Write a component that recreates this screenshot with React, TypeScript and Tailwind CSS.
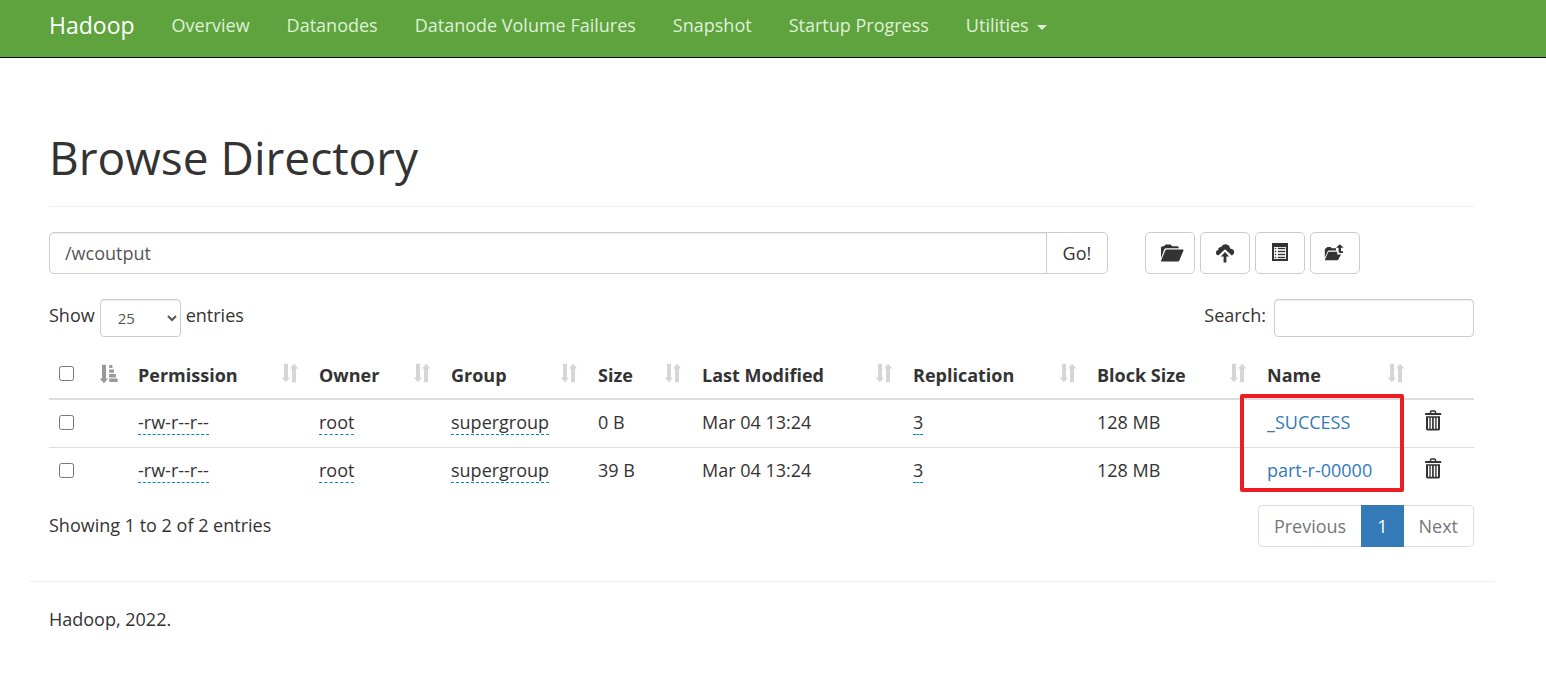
import React from "react";

type IconProps = { className?: string };

const FolderOpen = () => (
  <svg width="28" height="18" viewBox="-4 0 28 18" fill="currentColor" aria-hidden="true">
    <path d="M1 14.2V3.2L2.6 2.2H4L5.6 0.4H10.6L12.2 2.2H17.2Q18.9 2.2 18.9 3.9V4.2H6.2Q4.8 4.2 4.3 5.3Z" />
    <path d="M6.4 5.6H23Q23.8 5.6 23.5 6.4L19.3 16.6Q19 17.4 18.2 17.4H1.6Q0.8 17.4 1.1 16.6L5.3 6.4Q5.6 5.6 6.4 5.6Z" />
  </svg>
);

const CloudUpload = () => (
  <svg width="20" height="20" viewBox="0 0 20 20" fill="currentColor" aria-hidden="true">
    <path d="M2.8 12.2Q0.9 11.8 0.9 9.7Q0.9 7.4 3.2 7Q2.8 4.8 4.7 4.2Q5.6 4 6.1 4.2Q7.4 1.2 10.6 1.2Q14.6 1.6 15.1 5.4Q19.2 5.8 19.2 9.2Q19.2 11.8 16.8 12.4L10 6.2L3.6 12.3Z" />
    <path d="M10 9L14.2 13.6H11.4V19.4H8.6V13.6H5.8Z" />
  </svg>
);

const ListAlt = () => (
  <svg width="18" height="20" viewBox="0 0 18 20" fill="currentColor" aria-hidden="true">
    <path fillRule="evenodd" d="M1 0H17V18H1ZM3 4V16H15V4Z" />
    <path d="M4 5H5V6H4ZM7 5H14V6H7ZM4 8H5V9H4ZM7 8H14V9H7ZM4 11H5V12H4ZM7 11H14V12H7ZM4 14H5V15H4ZM7 14H14V15H7Z" stroke="currentColor" strokeWidth="0.4" />
  </svg>
);

const FolderUp = () => (
  <svg width="22" height="18" viewBox="0 0 22 18" fill="currentColor" aria-hidden="true">
    <path d="M0.8 13.6V5L2 4.2L3.4 3H6.6L7.8 4.2H12V6.6H5Q4 6.6 3.6 7.6Z" />
    <path d="M5 7.8H13.2V10.6H17L14.4 15.6Q14 16.3 13.2 16.3H1.4Q0.7 16.3 1 15.6L4 8.6Q4.3 7.8 5 7.8Z" />
    <path d="M15.8 0.3L19.6 3.8H17V7.2H19V9H15.8Q14.6 9 14.6 7.6V3.8H12Z" />
  </svg>
);

const Trash = () => (
  <svg width="18" height="21" viewBox="1 0 18 21" aria-hidden="true">
    <path d="M6.5 3V2Q6.5 1 7.5 1H10.5Q11.5 1 11.5 2V3" fill="none" stroke="currentColor" strokeWidth="1.5" />
    <path fill="currentColor" d="M2 3H16Q17.3 3.2 17.3 4V5H0.7V4Q0.7 3.2 2 3Z" />
    <path fill="currentColor" fillRule="evenodd" d="M2 6.2H16V19Q16 20.4 14.6 20.4H3.4Q2 20.4 2 19ZM4 7.8V18.7H5.4V7.8ZM6.7 7.8V18.7H8.1V7.8ZM9.8 7.8V18.7H11.2V7.8ZM12.6 7.8V18.7H14V7.8Z" />
  </svg>
);

const Sort = ({ className }: IconProps) => (
  <svg className={className} width="18" height="20" viewBox="0 0 18 20" fill="currentColor" aria-hidden="true">
    <path d="M3 0.8H7V14.6H9L5 19.2L0.6 14.6H3Z" />
    <path d="M11 19.2H15V5.4H17.4L13 0.8L9 5.4H11Z" />
  </svg>
);

const SortAscending = ({ className }: IconProps) => (
  <svg className={className} width="19" height="20" viewBox="0 0 19 20" fill="currentColor" aria-hidden="true">
    <path d="M3 0.8H7V14.6H9.2L5 19.2L0.6 14.6H3Z" />
    <path d="M10.2 1H13.4V4H10.2ZM10.2 5.4H15V8.8H10.2ZM10.2 10H16.8V13.4H10.2ZM10.2 14.6H18.6V18H10.2Z" />
  </svg>
);

const navItems = ["Overview", "Datanodes", "Datanode Volume Failures", "Snapshot", "Startup Progress"];

const columns = ["Permission", "Owner", "Group", "Size", "Last Modified", "Replication", "Block Size", "Name"];

const files = [
  { permission: "-rw-r--r--", owner: "root", group: "supergroup", size: "0 B", modified: "Mar 04 13:24", replication: "3", block: "128 MB", name: "_SUCCESS" },
  { permission: "-rw-r--r--", owner: "root", group: "supergroup", size: "39 B", modified: "Mar 04 13:24", replication: "3", block: "128 MB", name: "part-r-00000" },
];

const actions = [
  { label: "Create directory", icon: <FolderOpen /> },
  { label: "Upload files", icon: <CloudUpload /> },
  { label: "List", icon: <ListAlt /> },
  { label: "Cut and paste", icon: <FolderUp /> },
];

function Editable({ children }: { children: React.ReactNode }) {
  return <span className="mt-px inline-block border-b border-dashed border-b-[#0088cc] align-top leading-6">{children}</span>;
}

const checkbox = "block size-[15px]";
const field = "border border-[#cccccc] bg-white text-[#555555] shadow-[inset_0_1px_1px_rgba(0,0,0,0.075)]";

export default function App() {
  return (
    <div className="bg-white font-['Open_Sans','Noto_Sans',sans-serif] text-[18px] leading-[26px] text-[#333333]">
      <header className="border-b border-[#080808] bg-[#5fa33e] pr-[54px] pl-[49px]">
        <nav className="flex h-[57px] items-start gap-[37px] pt-3 text-[#dff0d8]">
          <a href="#" className="text-[23px] leading-[26px] text-white">Hadoop</a>
          {navItems.map((item) => (
            <a key={item} href="#">{item}</a>
          ))}
          <a href="#" className="flex items-center gap-2">
            Utilities
            <svg width="10" height="5" viewBox="0 0 10 5" fill="currentColor" className="mt-1" aria-hidden="true">
              <path d="M0 0H10L5 5Z" />
            </svg>
          </a>
        </nav>
      </header>

      <main className="pt-[73px] pr-[72px] pl-[49px]">
        <h1 className="border-b border-[#eeeeee] pb-[22px] text-[46px] leading-[53px]">Browse Directory</h1>

        <div className="-mx-[19px] mt-[25px] flex">
          <form className="flex w-3/4 px-[19px]" onSubmit={(e) => e.preventDefault()}>
            <input aria-label="Directory" defaultValue="/wcoutput" className={`${field} h-[42px] min-w-0 flex-1 rounded-l-[5px] px-[15px]`} />
            <button type="submit" className="-ml-px h-[42px] rounded-r-[5px] border border-[#cccccc] bg-white px-4">Go!</button>
          </form>
          <div className="flex w-1/4 gap-[5px] px-[18px]">
            {actions.map((action) => (
              <button key={action.label} type="button" aria-label={action.label} className="flex h-[42px] w-[50px] items-center justify-center rounded-[5px] border border-[#cccccc] bg-white">
                {action.icon}
              </button>
            ))}
          </div>
        </div>

        <div className="mt-[25px] flex justify-between">
          <div className="flex items-start gap-[5px]">
            <label htmlFor="length" className="pt-[3px]">Show</label>
            <select id="length" defaultValue="25" className={`${field} h-[38px] w-[81px] rounded-[4px] pl-[13px] text-[15px]`}>
              <option>25</option>
              <option>50</option>
              <option>100</option>
            </select>
            <span className="pt-[3px]">entries</span>
          </div>
          <div className="flex items-start gap-2">
            <label htmlFor="search" className="pt-[3px]">Search:</label>
            <input id="search" type="search" className={`${field} h-[38px] w-[200px] rounded-[4px] px-3 text-[15px]`} />
          </div>
        </div>

        <table className="mt-4 w-full table-fixed border-separate border-spacing-0 text-left">
          <colgroup>
            <col className="w-[79px]" />
            <col className="w-[181px]" />
            <col className="w-[132px]" />
            <col className="w-[147px]" />
            <col className="w-[104px]" />
            <col className="w-[211px]" />
            <col className="w-[184px]" />
            <col className="w-[170px]" />
            <col className="w-[158px]" />
            <col className="w-[59px]" />
          </colgroup>
          <thead>
            <tr className="h-[47px]">
              <th className="border-b-2 border-[#dddddd] px-[10px]">
                <div className="flex items-center justify-between pb-1">
                  <input type="checkbox" aria-label="Select all" className={checkbox} />
                  <SortAscending className="text-[#999999]" />
                </div>
              </th>
              {columns.map((column) => (
                <th key={column} className="border-b-2 border-[#dddddd] px-[10px] pb-[2px] font-bold whitespace-nowrap">
                  <div className="flex items-center justify-between">
                    {column}
                    <Sort className="mb-1 shrink-0 text-[#d6d6d6]" />
                  </div>
                </th>
              ))}
              <th className="border-b-2 border-[#dddddd]" />
            </tr>
          </thead>
          <tbody className="[&_td]:h-12 [&_td]:border-[#dddddd] [&_td]:px-[10px] [&_td]:pt-0 [&_td]:pb-[3px] [&_td]:whitespace-nowrap [&_tr:first-child_td]:h-[47px] [&_tr:not(:first-child)_td]:border-t">
            {files.map((file, i) => (
              <tr key={file.name}>
                <td><input type="checkbox" aria-label={`Select ${file.name}`} className={checkbox} /></td>
                <td><Editable>{file.permission}</Editable></td>
                <td><Editable>{file.owner}</Editable></td>
                <td><Editable>{file.group}</Editable></td>
                <td>{file.size}</td>
                <td>{file.modified}</td>
                <td><Editable>{file.replication}</Editable></td>
                <td>{file.block}</td>
                <td className="relative">
                  <a href="#" className="text-[#337ab7]">{file.name}</a>
                  {i === 0 && (
                    <span className="pointer-events-none absolute -top-[6px] -left-[17px] z-10 h-[98px] w-[164px] rounded-[2px] border-4 border-[#ed1c24]" />
                  )}
                </td>
                <td>
                  <button type="button" aria-label={`Delete ${file.name}`} className="mb-1 block"><Trash /></button>
                </td>
              </tr>
            ))}
          </tbody>
        </table>

        <div className="mt-[10px] flex items-start justify-between">
          <p className="pt-[7px]">Showing 1 to 2 of 2 entries</p>
          <nav aria-label="Pages" className="flex h-[42px] text-[#777777]">
            <a href="#" className="flex items-center rounded-l-[5px] border border-r-0 border-[#dddddd] px-[15px]">Previous</a>
            <a href="#" className="flex items-center bg-[#337ab7] px-4 text-white">1</a>
            <a href="#" className="flex items-center rounded-r-[5px] border border-l-0 border-[#dddddd] px-[15px]">Next</a>
          </nav>
        </div>

        <footer className="-mx-[19px] mt-[34px] border-t border-[#eeeeee] px-[19px] pt-6 pb-11">
          <p>Hadoop, 2022.</p>
        </footer>
      </main>
    </div>
  );
}
